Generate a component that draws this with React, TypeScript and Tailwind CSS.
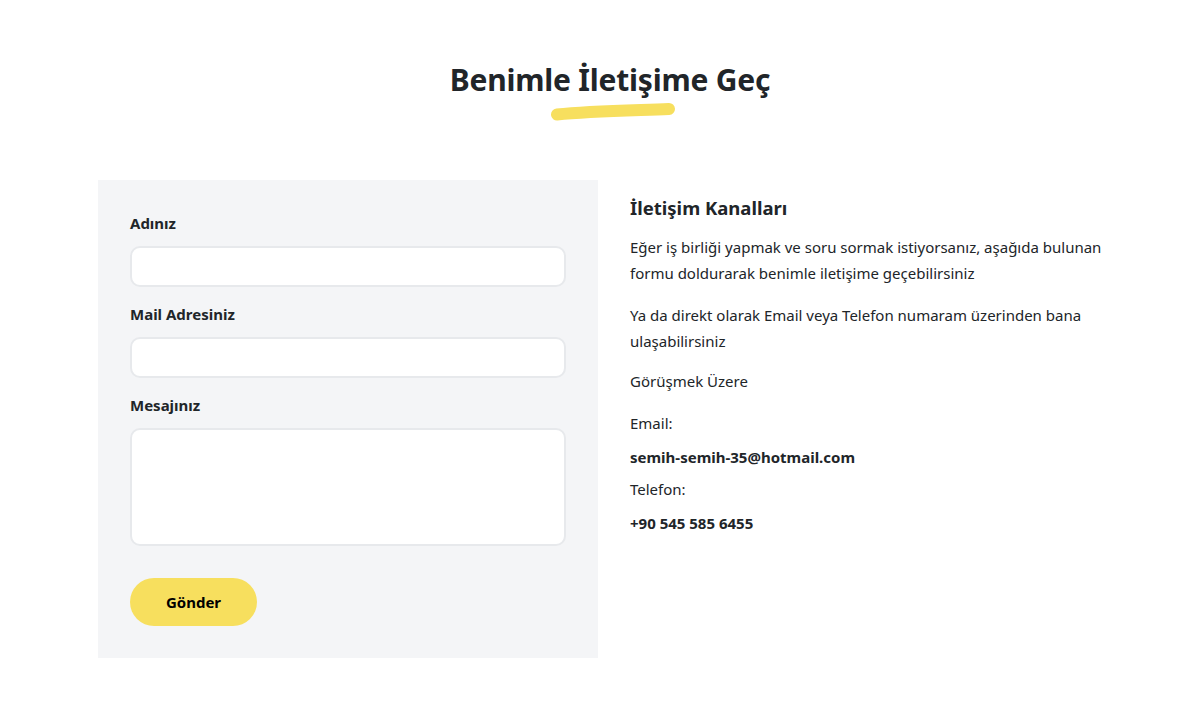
export default function App() {
  return (
    <div className="min-h-screen bg-white font-['Noto_Sans',sans-serif] text-[#212529]">
      <div className="mx-auto w-[1008px] pt-[58px] pb-12">
        <div className="flex flex-col items-center">
          <h2 className="pl-4 text-[30px] font-bold leading-[44px] tracking-[-0.2px]">Benimle İletişime Geç</h2>
          <svg width="132" height="20" viewBox="0 0 132 20" className="-mt-[1px] translate-x-[11px]">
            <path d="M10 13.5 C 42 10, 82 9.5, 122 8" stroke="#f7df5e" strokeWidth="12" strokeLinecap="round" fill="none" />
          </svg>
        </div>

        <div className="mt-[59px] grid grid-cols-2 gap-2">
          <form className="flex flex-col bg-[#f4f5f7] px-8 pt-[32px] pb-8">
            <label className="mb-[12px] text-[15px] font-bold leading-[22px]">Adınız</label>
            <input type="text" className="h-[41px] rounded-[10px] border-2 border-[#e7e9ec] bg-white px-3 outline-none" />
            <label className="mt-[16px] mb-[12px] text-[15px] font-bold leading-[22px]">Mail Adresiniz</label>
            <input type="email" className="h-[41px] rounded-[10px] border-2 border-[#e7e9ec] bg-white px-3 outline-none" />
            <label className="mt-[16px] mb-[12px] text-[15px] font-bold leading-[22px]">Mesajınız</label>
            <textarea className="h-[118px] resize-none rounded-[10px] border-2 border-[#e7e9ec] bg-white px-3 py-2 outline-none" />
            <button type="button" className="mt-8 h-12 w-[127px] rounded-full bg-[#f7df5e] text-[15px] font-bold text-black">
              Gönder
            </button>
          </form>

          <div className="pl-6 pt-[14px]">
            <h3 className="text-[18.5px] font-bold leading-[28px]">İletişim Kanalları</h3>
            <p className="mt-[12px] text-[15px] leading-[26px]">
              Eğer iş birliği yapmak ve soru sormak istiyorsanız, aşağıda bulunan formu doldurarak benimle iletişime geçebilirsiniz
            </p>
            <p className="mt-[16px] text-[15px] leading-[26px]">
              Ya da direkt olarak Email veya Telefon numaram üzerinden bana ulaşabilirsiniz
            </p>
            <p className="mt-[14px] text-[15px] leading-[26px]">Görüşmek Üzere</p>
            <p className="mt-[16px] text-[15px] leading-[26px]">Email:</p>
            <p className="mt-[8px] text-[15px] font-bold leading-[26px]">semih-semih-35@hotmail.com</p>
            <p className="mt-[6px] text-[15px] leading-[26px]">Telefon:</p>
            <p className="mt-[8px] text-[15px] font-bold leading-[26px]">+90 545 585 6455</p>
          </div>
        </div>
      </div>
    </div>
  );
}
